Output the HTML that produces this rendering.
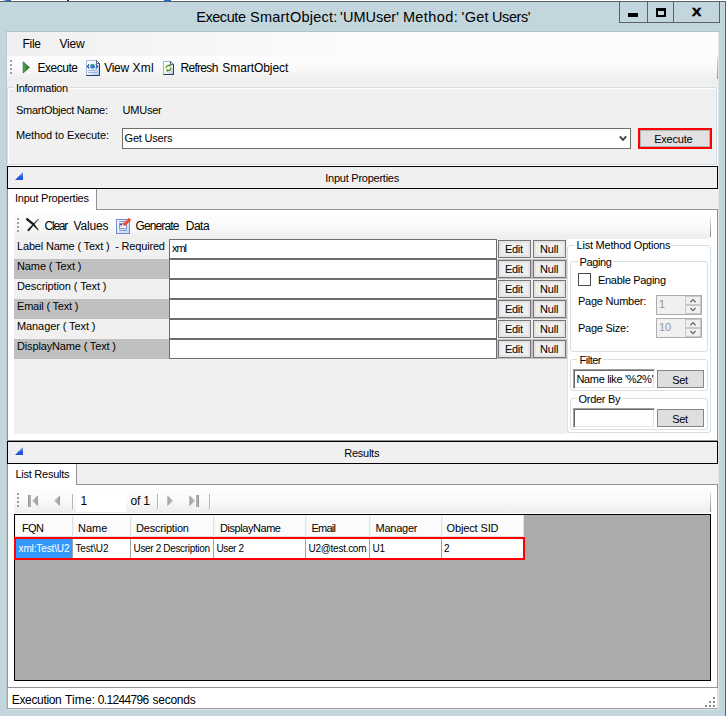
<!DOCTYPE html>
<html lang="en"><head><meta charset="utf-8"><title>Execute SmartObject</title>
<style>
html,body{margin:0;padding:0}
body{width:726px;height:716px;overflow:hidden;position:relative;background:#c3d6dd;font-family:"Liberation Sans",sans-serif;font-size:11px;color:#000}
div,span,i,svg{position:absolute;box-sizing:border-box}
.t{white-space:pre;line-height:1;display:block}
#txt{left:0;top:0}
.btn{background:#efefef;border:1px solid #767676;box-shadow:inset 0 0 0 2px #e4e4e4}
.tb{background:#fff;border:1px solid #6e6e6e}
.gb{border:1px solid #d5dfe5;border-radius:3px}
.lg{background:#f0f0f0}
.dg{background:#c0c0c0}
.hd{background:#f0f0f0;border:1px solid #000}
.tri{width:8px;height:8px;background:linear-gradient(#7fa8f2,#2a5ce0 60%,#1f50d8);clip-path:polygon(100% 0,100% 100%,0 100%)}
.strip{background:linear-gradient(#fdfdfd,#fafafa 45%,#ededed);border-radius:3px}
.grip{width:3px;height:15px;background:linear-gradient(90deg,transparent 2px,#fff 2px) 1px 1px/3px 4px repeat-y,repeating-linear-gradient(#a2a2a2 0 2px,transparent 2px 4px) 0 0/2px 100% no-repeat}
.sep{width:2px;background:linear-gradient(90deg,#b2b2b2 1px,#fff 1px)}
.hc{background:#fbfbfb;border:1px solid #e0e0e0;border-left-color:#f4f4f4;border-top-color:#f4f4f4;height:22px;top:515px}
.dc{background:#fff;border-right:1px solid #a0a0a0;height:19px;top:539px}
.btn2{background:#dedede;border:1px solid #868686}
.tb3{background:#fff;border:1px solid #fff;border-top-color:#a0a0a0;border-left-color:#a0a0a0;box-shadow:inset 1px 1px 0 #696969,inset -1px -1px 0 #e3e3e3}

</style></head>
<body>
<!-- window frame -->
<div style="left:0;top:0;width:726px;height:1px;background:#fff"></div>
<div style="left:3px;top:0;width:8px;height:1px;background:linear-gradient(90deg,#cfe0f5,#1c6fd0 50%)"></div>
<div style="left:164px;top:0;width:7px;height:1px;background:#1c6fd0"></div>
<div style="left:67px;top:0;width:2px;height:1px;background:#1c2f80"></div>

<div style="left:0;top:1px;width:726px;height:1px;background:#5c6068"></div>
<div style="left:725px;top:1px;width:1px;height:715px;background:#5c6068"></div>
<!-- caption buttons -->
<div style="left:619px;top:1px;width:101px;height:22px;border:1px solid #5c6068"></div>
<div style="left:647px;top:2px;width:1px;height:20px;background:#5c6068"></div>
<div style="left:673px;top:2px;width:1px;height:20px;background:#5c6068"></div>
<div style="left:628px;top:13px;width:10px;height:4px;background:#000"></div>
<div style="left:656px;top:8px;width:10px;height:9px;border:2px solid #000;border-top-width:3px"></div>
<!-- client -->
<div style="left:6px;top:31px;width:713px;height:679px;background:#dbe5ea;border-top:1px solid #b1c1c8;border-left:1px solid #b8c8cf"></div>
<div id="client" style="left:7px;top:32px;width:711px;height:676px;background:#f0f0f0"></div>
<!-- menu -->
<div style="left:7px;top:32px;width:711px;height:24px;background:linear-gradient(90deg,#f0f0f0,#fcfcfc 50%,#fdfdfd)"></div>
<!-- toolbar -->
<div class="strip" style="left:7px;top:56px;width:711px;height:25px"></div>
<div style="left:717px;top:58px;width:1px;height:21px;background:linear-gradient(#d8dadc,#8d9297)"></div>
<div class="grip" style="left:10px;top:60px"></div>
<svg style="left:22px;top:61px" width="9" height="13" viewBox="0 0 9 13"><defs><linearGradient id="gp" x1="0" y1="0" x2="1" y2="0"><stop offset="0" stop-color="#57a857"/><stop offset="1" stop-color="#1f6e1f"/></linearGradient></defs><path d="M1.2 .8L7.4 6.4L1.2 12z" fill="url(#gp)" stroke="#1c661c" stroke-width=".7" stroke-linejoin="round"/></svg>
<svg style="left:85px;top:60px" width="16" height="16" viewBox="0 0 16 16"><defs><linearGradient id="pg" x1="0" y1="0" x2="1" y2="1"><stop offset="0" stop-color="#fff"/><stop offset=".45" stop-color="#f1f5fd"/><stop offset="1" stop-color="#a9c2f3"/></linearGradient></defs><path d="M1.5 .5h10l3 3v12h-13z" fill="url(#pg)" stroke="#a3b8dc"/><path d="M11.5 .5l3 3v12h-13" fill="none" stroke="#263c63"/><path d="M11.5 .8v2.7h2.7" fill="#fff" stroke="#263c63" stroke-width=".8"/><path d="M4.1 4.4L2.5 6.4L4.1 8.4M10.9 4.4L12.5 6.4L10.9 8.4" stroke="#1c3a9a" stroke-width="1.2" fill="none"/><circle cx="7.5" cy="6.4" r="2.45" fill="#2d7ad8"/><path d="M5.6 5.2q1.4-1.6 3-1.1q-.2 1.3-1.4 1.7q.4 1.2-.6 1.9q-1.2-.9-1-2.5z" fill="#3fb43f"/><path d="M3.2 10.5h8.6M3.2 12.5h8.6" stroke="#9db6e0"/></svg>
<svg style="left:162px;top:60px" width="14" height="16" viewBox="0 0 14 16"><defs><linearGradient id="pr" x1="0" y1="0" x2="1" y2="1"><stop offset="0" stop-color="#fff"/><stop offset=".5" stop-color="#f6f8fc"/><stop offset="1" stop-color="#aebddf"/></linearGradient></defs><path d="M1.5 1.5h7l3 3v10h-10z" fill="url(#pr)" stroke="#9fb3cf"/><path d="M8.5 1.5l3 3v10h-10" fill="none" stroke="#2a4060"/><path d="M8.5 1.8v2.7h2.7" fill="#e8edf7" stroke="#2a4060" stroke-width=".8"/><path d="M4.2 7.8Q4.1 5.4 7 5.4M8.7 8.2Q8.8 10.5 6 10.5" stroke="#5a9a1e" stroke-width="1.3" fill="none" stroke-linecap="round"/><path d="M7 3.9L9.2 5.4L7 6.9zM6 9L3.8 10.5L6 12z" fill="#5a9a1e"/></svg>
<!-- Information groupbox -->
<div style="left:8px;top:88px;width:710px;height:78px;border:1px solid #fff;border-radius:2px"></div>
<div style="left:7px;top:87px;width:710px;height:78px;border:1px solid #d3dde3;border-radius:2px"></div>
<div style="left:14px;top:84px;width:55px;height:10px;background:#f0f0f0"></div>
<div class="tb" style="left:122px;top:128px;width:509px;height:21px"></div>
<svg style="left:619px;top:135px" width="8" height="7" viewBox="0 0 8 7"><path d="M.8 1.3L4 4.8L7.2 1.3" stroke="#404040" stroke-width="1.9" fill="none"/></svg>
<div style="left:638px;top:128px;width:74px;height:21px;border:2px solid #f00;background:#e1e1e1"></div>
<div style="left:640px;top:130px;width:70px;height:17px;border:1px solid #b5b5b5"></div>
<!-- Input Properties header -->
<div class="hd" style="left:7px;top:166px;width:711px;height:23px"></div>
<div class="tri" style="left:15px;top:172px"></div>
<!-- tab control 1 -->
<div style="left:7px;top:209px;width:711px;height:232px;background:#fff;border:1px solid #909399"></div>
<div style="left:7px;top:189px;width:90px;height:21px;background:#fff;border:1px solid #909399;border-bottom:0;border-top:0"></div>
<div class="strip" style="left:14px;top:214px;width:696px;height:25px"></div>
<div style="left:710px;top:217px;width:1px;height:20px;background:linear-gradient(#e4e4e4,#85888c)"></div>
<div class="grip" style="left:17px;top:218px"></div>
<svg style="left:25px;top:217px" width="15" height="15" viewBox="0 0 15 15"><path d="M1 1.7L2.3 .8L9.2 6.6L13.7 13L13.1 13.5L8 8.5L1.2 3z" fill="#1e1e1e"/><path d="M13.9 2L13.3 1.7L8 7L3 12L2.3 13.7L3.7 14.3L5.2 12.8L9.2 7.6z" fill="#1e1e1e"/></svg>
<svg style="left:115px;top:217px" width="17" height="18" viewBox="0 0 17 18"><defs><linearGradient id="gd" x1="0" y1="0" x2="1" y2="1"><stop offset="0" stop-color="#fff"/><stop offset="1" stop-color="#bcd3fb"/></linearGradient></defs><rect x="1.5" y="2.5" width="13" height="14" fill="url(#gd)" stroke="#6f87c6"/><path d="M4 4.5h6M4 13.5h8" stroke="#7b95d0"/><rect x="4.5" y="6.5" width="7" height="5" fill="#fff" stroke="#7b95d0"/><rect x="5" y="7" width="2.4" height="1.3" fill="#2a3cf0"/><path d="M8.6 8.2L15 1.9" stroke="#f0412f" stroke-width="3.2"/><path d="M8.2 7.2L14 1.4" stroke="#ff8a78" stroke-width="1"/><path d="M6.2 10.1L7.5 7.1L9.4 9z" fill="#f5e2b4"/><path d="M6.2 10.1L6.7 9L7.4 9.7z" fill="#7a2a10"/></svg>
<!-- input rows -->
<div class="lg" style="left:14px;top:239px;width:553px;height:195px"></div>
<div class="dg" style="left:14px;top:259px;width:553px;height:20px"></div>
<div class="dg" style="left:14px;top:299px;width:553px;height:20px"></div>
<div class="dg" style="left:14px;top:339px;width:553px;height:20px"></div>
<div class="tb" style="left:169px;top:239px;width:328px;height:20px"></div>
<div class="btn" style="left:498px;top:240px;width:33px;height:18px"></div>
<div class="btn" style="left:533px;top:240px;width:33px;height:18px"></div>
<div class="tb" style="left:169px;top:259px;width:328px;height:20px"></div>
<div class="btn" style="left:498px;top:260px;width:33px;height:18px"></div>
<div class="btn" style="left:533px;top:260px;width:33px;height:18px"></div>
<div class="tb" style="left:169px;top:279px;width:328px;height:20px"></div>
<div class="btn" style="left:498px;top:280px;width:33px;height:18px"></div>
<div class="btn" style="left:533px;top:280px;width:33px;height:18px"></div>
<div class="tb" style="left:169px;top:299px;width:328px;height:20px"></div>
<div class="btn" style="left:498px;top:300px;width:33px;height:18px"></div>
<div class="btn" style="left:533px;top:300px;width:33px;height:18px"></div>
<div class="tb" style="left:169px;top:319px;width:328px;height:20px"></div>
<div class="btn" style="left:498px;top:320px;width:33px;height:18px"></div>
<div class="btn" style="left:533px;top:320px;width:33px;height:18px"></div>
<div class="tb" style="left:169px;top:339px;width:328px;height:20px"></div>
<div class="btn" style="left:498px;top:340px;width:33px;height:18px"></div>
<div class="btn" style="left:533px;top:340px;width:33px;height:18px"></div>
<!-- List Method Options -->
<div class="gb" style="left:567px;top:245px;width:144px;height:188px"></div>
<div style="left:575px;top:240px;width:97px;height:10px;background:#fff"></div>
<div class="gb" style="left:570px;top:261px;width:138px;height:91px"></div>
<div style="left:578px;top:256px;width:35px;height:10px;background:#fff"></div>
<div style="left:578px;top:273px;width:13px;height:13px;border:1px solid #4a4a4a;background:#fff"></div>
<div style="left:656px;top:295px;width:46px;height:20px;border:1px solid #adadad;background:#f0f0f0"></div>
<div style="left:656px;top:318px;width:46px;height:20px;border:1px solid #adadad;background:#f0f0f0"></div>
<div style="left:685px;top:296px;width:16px;height:9px;border:1px solid #c8c8c8;background:#f0f0f0"></div>
<div style="left:685px;top:305px;width:16px;height:9px;border:1px solid #c8c8c8;background:#f0f0f0"></div>
<div style="left:685px;top:319px;width:16px;height:9px;border:1px solid #c8c8c8;background:#f0f0f0"></div>
<div style="left:685px;top:328px;width:16px;height:9px;border:1px solid #c8c8c8;background:#f0f0f0"></div>
<svg style="left:689px;top:298px" width="8" height="14" viewBox="0 0 8 14"><path d="M1.4 4.2L4 1.6L6.6 4.2M1.4 10L4 12.6L6.6 10" stroke="#686868" stroke-width="1.25" fill="none"/></svg>
<svg style="left:689px;top:321px" width="8" height="14" viewBox="0 0 8 14"><path d="M1.4 4.2L4 1.6L6.6 4.2M1.4 10L4 12.6L6.6 10" stroke="#686868" stroke-width="1.25" fill="none"/></svg>
<div class="gb" style="left:570px;top:359px;width:138px;height:32px"></div>
<div style="left:577px;top:354px;width:26px;height:10px;background:#fff"></div>
<div class="tb3" style="left:573px;top:369px;width:82px;height:20px"></div>
<div class="btn2" style="left:657px;top:370px;width:47px;height:18px"></div>
<div class="gb" style="left:570px;top:398px;width:138px;height:32px"></div>
<div style="left:577px;top:393px;width:45px;height:10px;background:#fff"></div>
<div class="tb3" style="left:573px;top:408px;width:82px;height:20px"></div>
<div class="btn2" style="left:657px;top:409px;width:47px;height:18px"></div>
<!-- Results header -->
<div class="hd" style="left:7px;top:441px;width:711px;height:23px"></div>
<div class="tri" style="left:15px;top:447px"></div>
<!-- tab control 2 -->
<div style="left:7px;top:484px;width:711px;height:204px;background:#fff;border:1px solid #909399"></div>
<div style="left:7px;top:464px;width:70px;height:21px;background:#fff;border:1px solid #909399;border-bottom:0;border-top:0"></div>
<div class="strip" style="left:14px;top:489px;width:696px;height:24px"></div>
<div style="left:710px;top:492px;width:1px;height:20px;background:linear-gradient(#e4e4e4,#85888c)"></div>
<div class="grip" style="left:17px;top:493px"></div>
<svg style="left:27px;top:494px" width="12" height="13" viewBox="0 0 12 13"><defs><linearGradient id="nl" x1="0" y1="0" x2="1" y2="0"><stop offset="0" stop-color="#c6c6c6"/><stop offset="1" stop-color="#9c9c9c"/></linearGradient><linearGradient id="nr" x1="1" y1="0" x2="0" y2="0"><stop offset="0" stop-color="#c6c6c6"/><stop offset="1" stop-color="#9c9c9c"/></linearGradient></defs><rect x="1" y="1" width="3" height="12" fill="#b0b0b0"/><rect x="1" y="1" width="1" height="12" fill="#959595"/><path d="M11 1.2V12.2L5 6.7z" fill="url(#nl)"/></svg>
<svg style="left:53px;top:494px" width="8" height="13" viewBox="0 0 8 13"><path d="M7 1.4V12L1 6.7z" fill="url(#nl)"/></svg>
<div class="sep" style="left:72px;top:494px;height:15px"></div>
<div style="left:76px;top:491px;width:50px;height:21px;background:#fff"></div>
<div class="sep" style="left:157px;top:494px;height:15px"></div>
<svg style="left:167px;top:494px" width="8" height="13" viewBox="0 0 8 13"><path d="M.4 1.4V12L6.2 6.7z" fill="url(#nr)"/></svg>
<svg style="left:188px;top:494px" width="12" height="13" viewBox="0 0 12 13"><rect x="8" y="1" width="3" height="12" fill="#b0b0b0"/><rect x="10" y="1" width="1" height="12" fill="#959595"/><path d="M1.4 1.2V12.2L7.2 6.7z" fill="url(#nr)"/></svg>
<div class="sep" style="left:209px;top:494px;height:15px"></div>
<!-- grid -->
<div style="left:14px;top:514px;width:697px;height:167px;background:#ababab;border:1px solid #000"></div>
<div class="hc" style="left:15px;width:58px"></div>
<div class="hc" style="left:73px;width:58px"></div>
<div class="hc" style="left:131px;width:83px"></div>
<div class="hc" style="left:214px;width:92px"></div>
<div class="hc" style="left:306px;width:64px"></div>
<div class="hc" style="left:370px;width:72px"></div>
<div class="hc" style="left:442px;width:82px"></div>
<div style="left:14px;top:537px;width:511px;height:23px;border:2px solid #f00;background:#fff"></div>
<div class="dc" style="left:16px;width:57px;background:#3399ff"></div>
<div class="dc" style="left:73px;width:58px"></div>
<div class="dc" style="left:131px;width:83px"></div>
<div class="dc" style="left:214px;width:92px"></div>
<div class="dc" style="left:306px;width:64px"></div>
<div class="dc" style="left:370px;width:72px"></div>
<!-- status bar -->
<div style="left:7px;top:688px;width:711px;height:21px;background:#fff;border:1px solid #a3a3a3;border-top:0;border-right-color:#dcdcdc"></div>
<svg style="left:704px;top:696px" width="11" height="11" viewBox="0 0 11 11"><path d="M9 1h2v2h-2zM5 5h2v2h-2zM9 5h2v2h-2zM1 9h2v2h-2zM5 9h2v2h-2zM9 9h2v2h-2z" fill="#8c8c8c"/></svg>

<div id="txt">
<span class="t" style="left:692px;top:6.5px;font-size:11.5px;color:#000;font-weight:bold;-webkit-text-stroke:.5px #000;transform:scaleX(1.2);transform-origin:0 0;">X</span>
<span class="t" style="left:196.2px;top:9.5px;font-size:14.5px;color:#000;letter-spacing:-0.434px;">Execute</span>
<span class="t" style="left:250px;top:9.5px;font-size:14.5px;color:#000;letter-spacing:0.245px;">SmartObject:</span>
<span class="t" style="left:340.1px;top:9.5px;font-size:14.5px;color:#000;letter-spacing:0.028px;">'UMUser'</span>
<span class="t" style="left:402.9px;top:9.5px;font-size:14.5px;color:#000;letter-spacing:0.399px;">Method:</span>
<span class="t" style="left:461.6px;top:9.5px;font-size:14.5px;color:#000;letter-spacing:0.286px;">'Get</span>
<span class="t" style="left:492px;top:9.5px;font-size:14.5px;color:#000;letter-spacing:-0.408px;">Users'</span>
<span class="t" style="left:22.5px;top:37.5px;font-size:12px;color:#000;letter-spacing:-0.281px;">File</span>
<span class="t" style="left:59.5px;top:37.5px;font-size:12px;color:#000;letter-spacing:-0.199px;">View</span>
<span class="t" style="left:37.5px;top:61.5px;font-size:12px;color:#000;letter-spacing:-0.477px;">Execute</span>
<span class="t" style="left:104.3px;top:61.5px;font-size:12px;color:#000;letter-spacing:-0.332px;">View</span>
<span class="t" style="left:132.4px;top:61.5px;font-size:12px;color:#000;letter-spacing:0.264px;">Xml</span>
<span class="t" style="left:180.4px;top:61.5px;font-size:12px;color:#000;letter-spacing:-0.672px;">Refresh</span>
<span class="t" style="left:222.3px;top:61.5px;font-size:12px;color:#000;letter-spacing:-0.069px;">SmartObject</span>
<span class="t" style="left:16px;top:82.5px;font-size:11px;color:#000;letter-spacing:-0.303px;">Information</span>
<span class="t" style="left:16px;top:104.5px;font-size:11px;color:#000;letter-spacing:-0.287px;">SmartObject Name:</span>
<span class="t" style="left:122.5px;top:104.5px;font-size:11px;color:#000;letter-spacing:-0.209px;">UMUser</span>
<span class="t" style="left:16px;top:129.5px;font-size:11px;color:#000;letter-spacing:-0.105px;">Method to Execute:</span>
<span class="t" style="left:124.6px;top:132.5px;font-size:11px;color:#000;letter-spacing:-0.214px;">Get Users</span>
<span class="t" style="left:654.2px;top:133.5px;font-size:11px;color:#000;letter-spacing:-0.208px;">Execute</span>
<span class="t" style="left:325.3px;top:172.5px;font-size:11px;color:#000;letter-spacing:-0.25px;">Input Properties</span>
<span class="t" style="left:15px;top:192.5px;font-size:11px;color:#000;letter-spacing:-0.244px;">Input Properties</span>
<span class="t" style="left:44.5px;top:219.5px;font-size:12px;color:#000;letter-spacing:-1.222px;">Clear</span>
<span class="t" style="left:73.5px;top:219.5px;font-size:12px;color:#000;letter-spacing:-0.182px;">Values</span>
<span class="t" style="left:135.5px;top:219.5px;font-size:12px;color:#000;letter-spacing:-0.878px;">Generate</span>
<span class="t" style="left:185.8px;top:219.5px;font-size:12px;color:#000;letter-spacing:-0.52px;">Data</span>
<span class="t" style="left:17px;top:240.5px;font-size:11px;color:#000;letter-spacing:-0.176px;">Label Name ( Text )  - Required</span>
<span class="t" style="left:17px;top:260.5px;font-size:11px;color:#000;letter-spacing:-0.109px;">Name ( Text )</span>
<span class="t" style="left:17px;top:280.5px;font-size:11px;color:#000;letter-spacing:-0.105px;">Description ( Text )</span>
<span class="t" style="left:17px;top:300.5px;font-size:11px;color:#000;letter-spacing:-0.191px;">Email ( Text )</span>
<span class="t" style="left:17px;top:320.5px;font-size:11px;color:#000;letter-spacing:-0.093px;">Manager ( Text )</span>
<span class="t" style="left:17px;top:340.5px;font-size:11px;color:#000;letter-spacing:-0.152px;">DisplayName ( Text )</span>
<span class="t" style="left:172px;top:243.0px;font-size:11px;color:#000;letter-spacing:-1.055px;">xml</span>
<span class="t" style="left:505px;top:243.5px;font-size:11px;color:#000;letter-spacing:-0.323px;">Edit</span>
<span class="t" style="left:540px;top:243.5px;font-size:11px;color:#000;letter-spacing:-0.151px;">Null</span>
<span class="t" style="left:505px;top:263.5px;font-size:11px;color:#000;letter-spacing:-0.323px;">Edit</span>
<span class="t" style="left:540px;top:263.5px;font-size:11px;color:#000;letter-spacing:-0.151px;">Null</span>
<span class="t" style="left:505px;top:283.5px;font-size:11px;color:#000;letter-spacing:-0.323px;">Edit</span>
<span class="t" style="left:540px;top:283.5px;font-size:11px;color:#000;letter-spacing:-0.151px;">Null</span>
<span class="t" style="left:505px;top:303.5px;font-size:11px;color:#000;letter-spacing:-0.323px;">Edit</span>
<span class="t" style="left:540px;top:303.5px;font-size:11px;color:#000;letter-spacing:-0.151px;">Null</span>
<span class="t" style="left:505px;top:323.5px;font-size:11px;color:#000;letter-spacing:-0.323px;">Edit</span>
<span class="t" style="left:540px;top:323.5px;font-size:11px;color:#000;letter-spacing:-0.151px;">Null</span>
<span class="t" style="left:505px;top:343.5px;font-size:11px;color:#000;letter-spacing:-0.323px;">Edit</span>
<span class="t" style="left:540px;top:343.5px;font-size:11px;color:#000;letter-spacing:-0.151px;">Null</span>
<span class="t" style="left:576.5px;top:239.5px;font-size:11px;color:#000;letter-spacing:-0.214px;">List Method Options</span>
<span class="t" style="left:579.5px;top:256.5px;font-size:11px;color:#000;letter-spacing:-0.353px;">Paging</span>
<span class="t" style="left:598px;top:274.5px;font-size:11px;color:#000;letter-spacing:-0.297px;">Enable Paging</span>
<span class="t" style="left:578px;top:295.5px;font-size:11px;color:#000;letter-spacing:-0.24px;">Page Number:</span>
<span class="t" style="left:578px;top:322.5px;font-size:11px;color:#000;letter-spacing:-0.245px;">Page Size:</span>
<span class="t" style="left:659px;top:298.5px;font-size:11px;color:#959595;">1</span>
<span class="t" style="left:659px;top:321.5px;font-size:11px;color:#959595;">10</span>
<span class="t" style="left:579.5px;top:354.5px;font-size:11px;color:#000;letter-spacing:-0.491px;">Filter</span>
<span class="t" style="left:576.5px;top:373.5px;font-size:11px;color:#000;letter-spacing:-0.346px;">Name like '%2%'</span>
<span class="t" style="left:672.3px;top:374.5px;font-size:11px;color:#000;letter-spacing:-0.408px;">Set</span>
<span class="t" style="left:578.5px;top:393.5px;font-size:11px;color:#000;letter-spacing:-0.288px;">Order By</span>
<span class="t" style="left:672.3px;top:413.5px;font-size:11px;color:#000;letter-spacing:-0.408px;">Set</span>
<span class="t" style="left:344.3px;top:447.5px;font-size:11px;color:#000;letter-spacing:-0.265px;">Results</span>
<span class="t" style="left:15.5px;top:468.5px;font-size:11px;color:#000;letter-spacing:-0.26px;">List Results</span>
<span class="t" style="left:80.5px;top:494.5px;font-size:12px;color:#000;">1</span>
<span class="t" style="left:130.5px;top:494.5px;font-size:12px;color:#000;letter-spacing:-0.172px;">of 1</span>
<span class="t" style="left:22px;top:522.5px;font-size:11px;color:#000;letter-spacing:-0.617px;">FQN</span>
<span class="t" style="left:78px;top:522.5px;font-size:11px;color:#000;">Name</span>
<span class="t" style="left:136px;top:522.5px;font-size:11px;color:#000;letter-spacing:-0.203px;">Description</span>
<span class="t" style="left:220px;top:522.5px;font-size:11px;color:#000;letter-spacing:-0.442px;">DisplayName</span>
<span class="t" style="left:311.5px;top:522.5px;font-size:11px;color:#000;letter-spacing:-0.754px;">Email</span>
<span class="t" style="left:375.5px;top:522.5px;font-size:11px;color:#000;letter-spacing:-0.237px;">Manager</span>
<span class="t" style="left:446.5px;top:522.5px;font-size:11px;color:#000;letter-spacing:-0.132px;">Object SID</span>
<span class="t" style="left:18.5px;top:543.5px;font-size:10px;color:#fff;letter-spacing:-0.123px;">xml:Test\U2</span>
<span class="t" style="left:75.5px;top:543.5px;font-size:10px;color:#000;letter-spacing:-0.151px;">Test\U2</span>
<span class="t" style="left:133.5px;top:543.5px;font-size:10px;color:#000;letter-spacing:-0.339px;">User 2 Description</span>
<span class="t" style="left:216.5px;top:543.5px;font-size:10px;color:#000;letter-spacing:-0.391px;">User 2</span>
<span class="t" style="left:308.5px;top:543.5px;font-size:10px;color:#000;letter-spacing:-0.273px;">U2@test.com</span>
<span class="t" style="left:372.5px;top:543.5px;font-size:10px;color:#000;letter-spacing:-0.297px;">U1</span>
<span class="t" style="left:444px;top:543.5px;font-size:10px;color:#000;">2</span>
<span class="t" style="left:11.8px;top:693.5px;font-size:12px;color:#000;letter-spacing:-0.338px;">Execution</span>
<span class="t" style="left:65px;top:693.5px;font-size:12px;color:#000;letter-spacing:0.159px;">Time:</span>
<span class="t" style="left:97.8px;top:693.5px;font-size:12px;color:#000;letter-spacing:-0.654px;">0.1244796</span>
<span class="t" style="left:152.4px;top:693.5px;font-size:12px;color:#000;letter-spacing:-0.217px;">seconds</span>
</div>
</body></html>
